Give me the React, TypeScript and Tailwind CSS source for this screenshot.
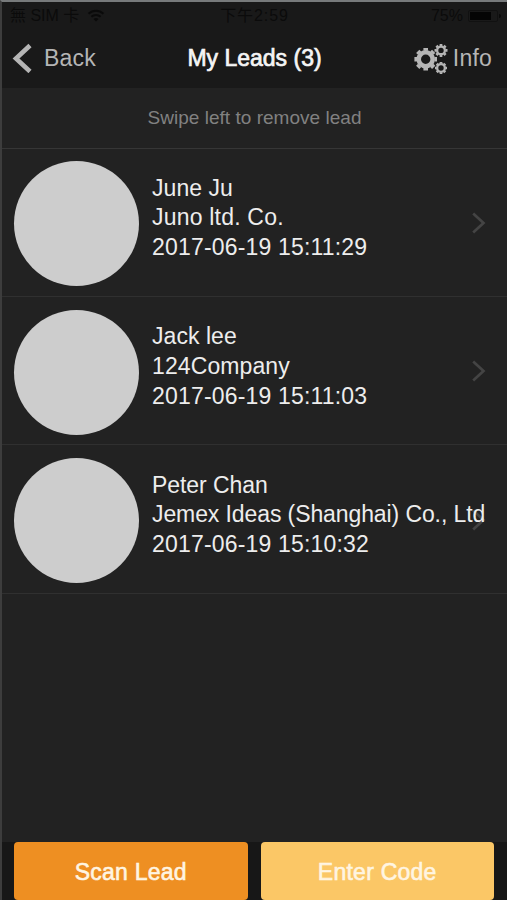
import React from "react";

type Lead = {
  name: string;
  company: string;
  date: string;
  nameSpacing: string;
  companySpacing: string;
};

const leads: Lead[] = [
  { name: "June Ju", company: "Juno ltd. Co.", date: "2017-06-19 15:11:29", nameSpacing: "tracking-[0.05px]", companySpacing: "tracking-[0.2px]" },
  { name: "Jack lee", company: "124Company", date: "2017-06-19 15:11:03", nameSpacing: "tracking-[0.05px]", companySpacing: "tracking-[0.1px]" },
  { name: "Peter Chan", company: "Jemex Ideas (Shanghai) Co., Ltd", date: "2017-06-19 15:10:32", nameSpacing: "tracking-[-0.05px]", companySpacing: "tracking-[-0.1px]" },
];

function WifiIcon() {
  return (
    <svg viewBox="0 0 18 13" className="h-[13px] w-[18px]" fill="none" stroke="#0a0a0a" strokeWidth="2">
      <path d="M1.5 4.8C5.7.7 12.3.7 16.5 4.8M4.4 7.8c2.6-2.5 6.6-2.5 9.2 0" />
      <path d="M9 12.5 6.5 10q2.5-2 5 0z" fill="#0a0a0a" stroke="none" />
    </svg>
  );
}

const toothAngles = [0, 45, 90, 135];

function Gear({ x, y, outer, ring, hole, tooth }: { x: number; y: number; outer: number; ring: number; hole: number; tooth: number }) {
  return (
    <g transform={`translate(${x} ${y})`}>
      <circle r={(ring + hole) / 2} fill="none" stroke="#b5b5b5" strokeWidth={ring - hole} />
      {toothAngles.map((angle) => (
        <path
          key={angle}
          d={`M${-outer} 0H${-ring + 0.6}M${ring - 0.6} 0H${outer}`}
          stroke="#b5b5b5"
          strokeWidth={tooth}
          transform={`rotate(${angle})`}
        />
      ))}
    </g>
  );
}

function GearsIcon() {
  return (
    <svg viewBox="0 0 34 32" className="h-[32px] w-[34px]">
      <Gear x={11.7} y={17.3} outer={11.3} ring={9.2} hole={4.7} tooth={4.6} />
      <Gear x={27} y={8.4} outer={6.5} ring={5} hole={2.7} tooth={2.7} />
      <Gear x={27} y={26} outer={6} ring={5} hole={2.7} tooth={2.7} />
    </svg>
  );
}

function StatusBar() {
  return (
    <div className="grid h-[26px] grid-cols-3 items-center pt-px text-[16px] leading-none text-[#0b0b0b]">
      <div className="flex items-center gap-[8px] pl-[8px]">
        <span className="whitespace-nowrap">無 SIM 卡</span>
        <WifiIcon />
      </div>
      <div className="text-center whitespace-nowrap tracking-[0.9px]">下午2:59</div>
      <div className="flex items-center justify-end gap-[5px] pr-[6px]">
        <span>75%</span>
        <div className="flex items-center gap-px">
          <div className="flex h-[12px] w-[30px] rounded-[2px] border border-[#111111] p-px">
            <div className="w-[21px] bg-[#040404]" />
          </div>
          <div className="h-[4px] w-[2px] rounded-r bg-[#0a0a0a]" />
        </div>
      </div>
    </div>
  );
}

function LeadRow({ lead }: { lead: Lead }) {
  return (
    <li className="relative flex h-[148.5px] items-center border-b border-[#303030] pt-[4px] pl-[12px]">
      <svg viewBox="0 0 14 22" className="absolute top-[63.5px] right-[21px] h-[22px] w-[14px]" fill="none" stroke="#444444" strokeWidth="2.7">
        <path d="M1.2 1.5 11.5 11 1.2 20.5" />
      </svg>
      <div className="size-[125px] shrink-0 rounded-full bg-[#cdcdcd]" />
      <div className="relative ml-[13px] pb-[11px] text-[23px] leading-[29.7px] whitespace-nowrap text-[#ededed]">
        <div className={lead.nameSpacing}>{lead.name}</div>
        <div className={lead.companySpacing}>{lead.company}</div>
        <div className="tracking-[0.18px]">{lead.date}</div>
      </div>
    </li>
  );
}

export default function App() {
  return (
    <div className="flex h-[900px] w-[507px] flex-col overflow-hidden border-t-2 border-l-2 border-t-[#777a7b] border-l-[#3d3d3d] bg-[#222222] font-['Liberation_Sans','Noto_Sans_CJK_TC',sans-serif]">
      <header className="h-[86px] shrink-0 bg-[#191919]">
        <StatusBar />
        <div className="grid h-[60px] grid-cols-[150px_1fr_150px] items-center text-[#b5b5b5]">
          <div className="flex items-center pl-[10px] text-[23px]">
            <svg viewBox="0 0 20 30" className="h-[30px] w-[20px]" fill="none" stroke="#b5b5b5" strokeWidth="4.6">
              <path d="M18 2.5 4 15.5 18 28.5" />
            </svg>
            <span className="ml-[12px] pt-px tracking-[0.2px]">Back</span>
          </div>
          <h1 className="pt-px text-center text-[23px] whitespace-nowrap text-[#f5f5f5] [-webkit-text-stroke:0.7px_#f5f5f5]">My Leads (3)</h1>
          <div className="flex items-center justify-end gap-[5px] pr-[15px] text-[23px]">
            <GearsIcon />
            <span className="pt-px tracking-[0.2px]">Info</span>
          </div>
        </div>
      </header>
      <p className="flex h-[61px] shrink-0 items-center justify-center border-b border-[#363636] text-[19px] tracking-[0.03px] text-[#818181]">
        Swipe left to remove lead
      </p>
      <ul className="-mt-px flex-1">
        {leads.map((lead) => (
          <LeadRow key={lead.name} lead={lead} />
        ))}
      </ul>
      <footer className="flex h-[58px] shrink-0 gap-[13px] bg-[#171717] pr-[13px] pl-[12px] text-[23px] tracking-[0.25px] text-[#fff5e2]">
        <button className="flex-1 rounded-[4px] bg-[#ee8f22] pt-[2px] [-webkit-text-stroke:0.6px_#fff5e2]">Scan Lead</button>
        <button className="flex-1 rounded-[4px] bg-[#fbc766] pt-[2px] [-webkit-text-stroke:0.6px_#fff5e2]">Enter Code</button>
      </footer>
    </div>
  );
}
